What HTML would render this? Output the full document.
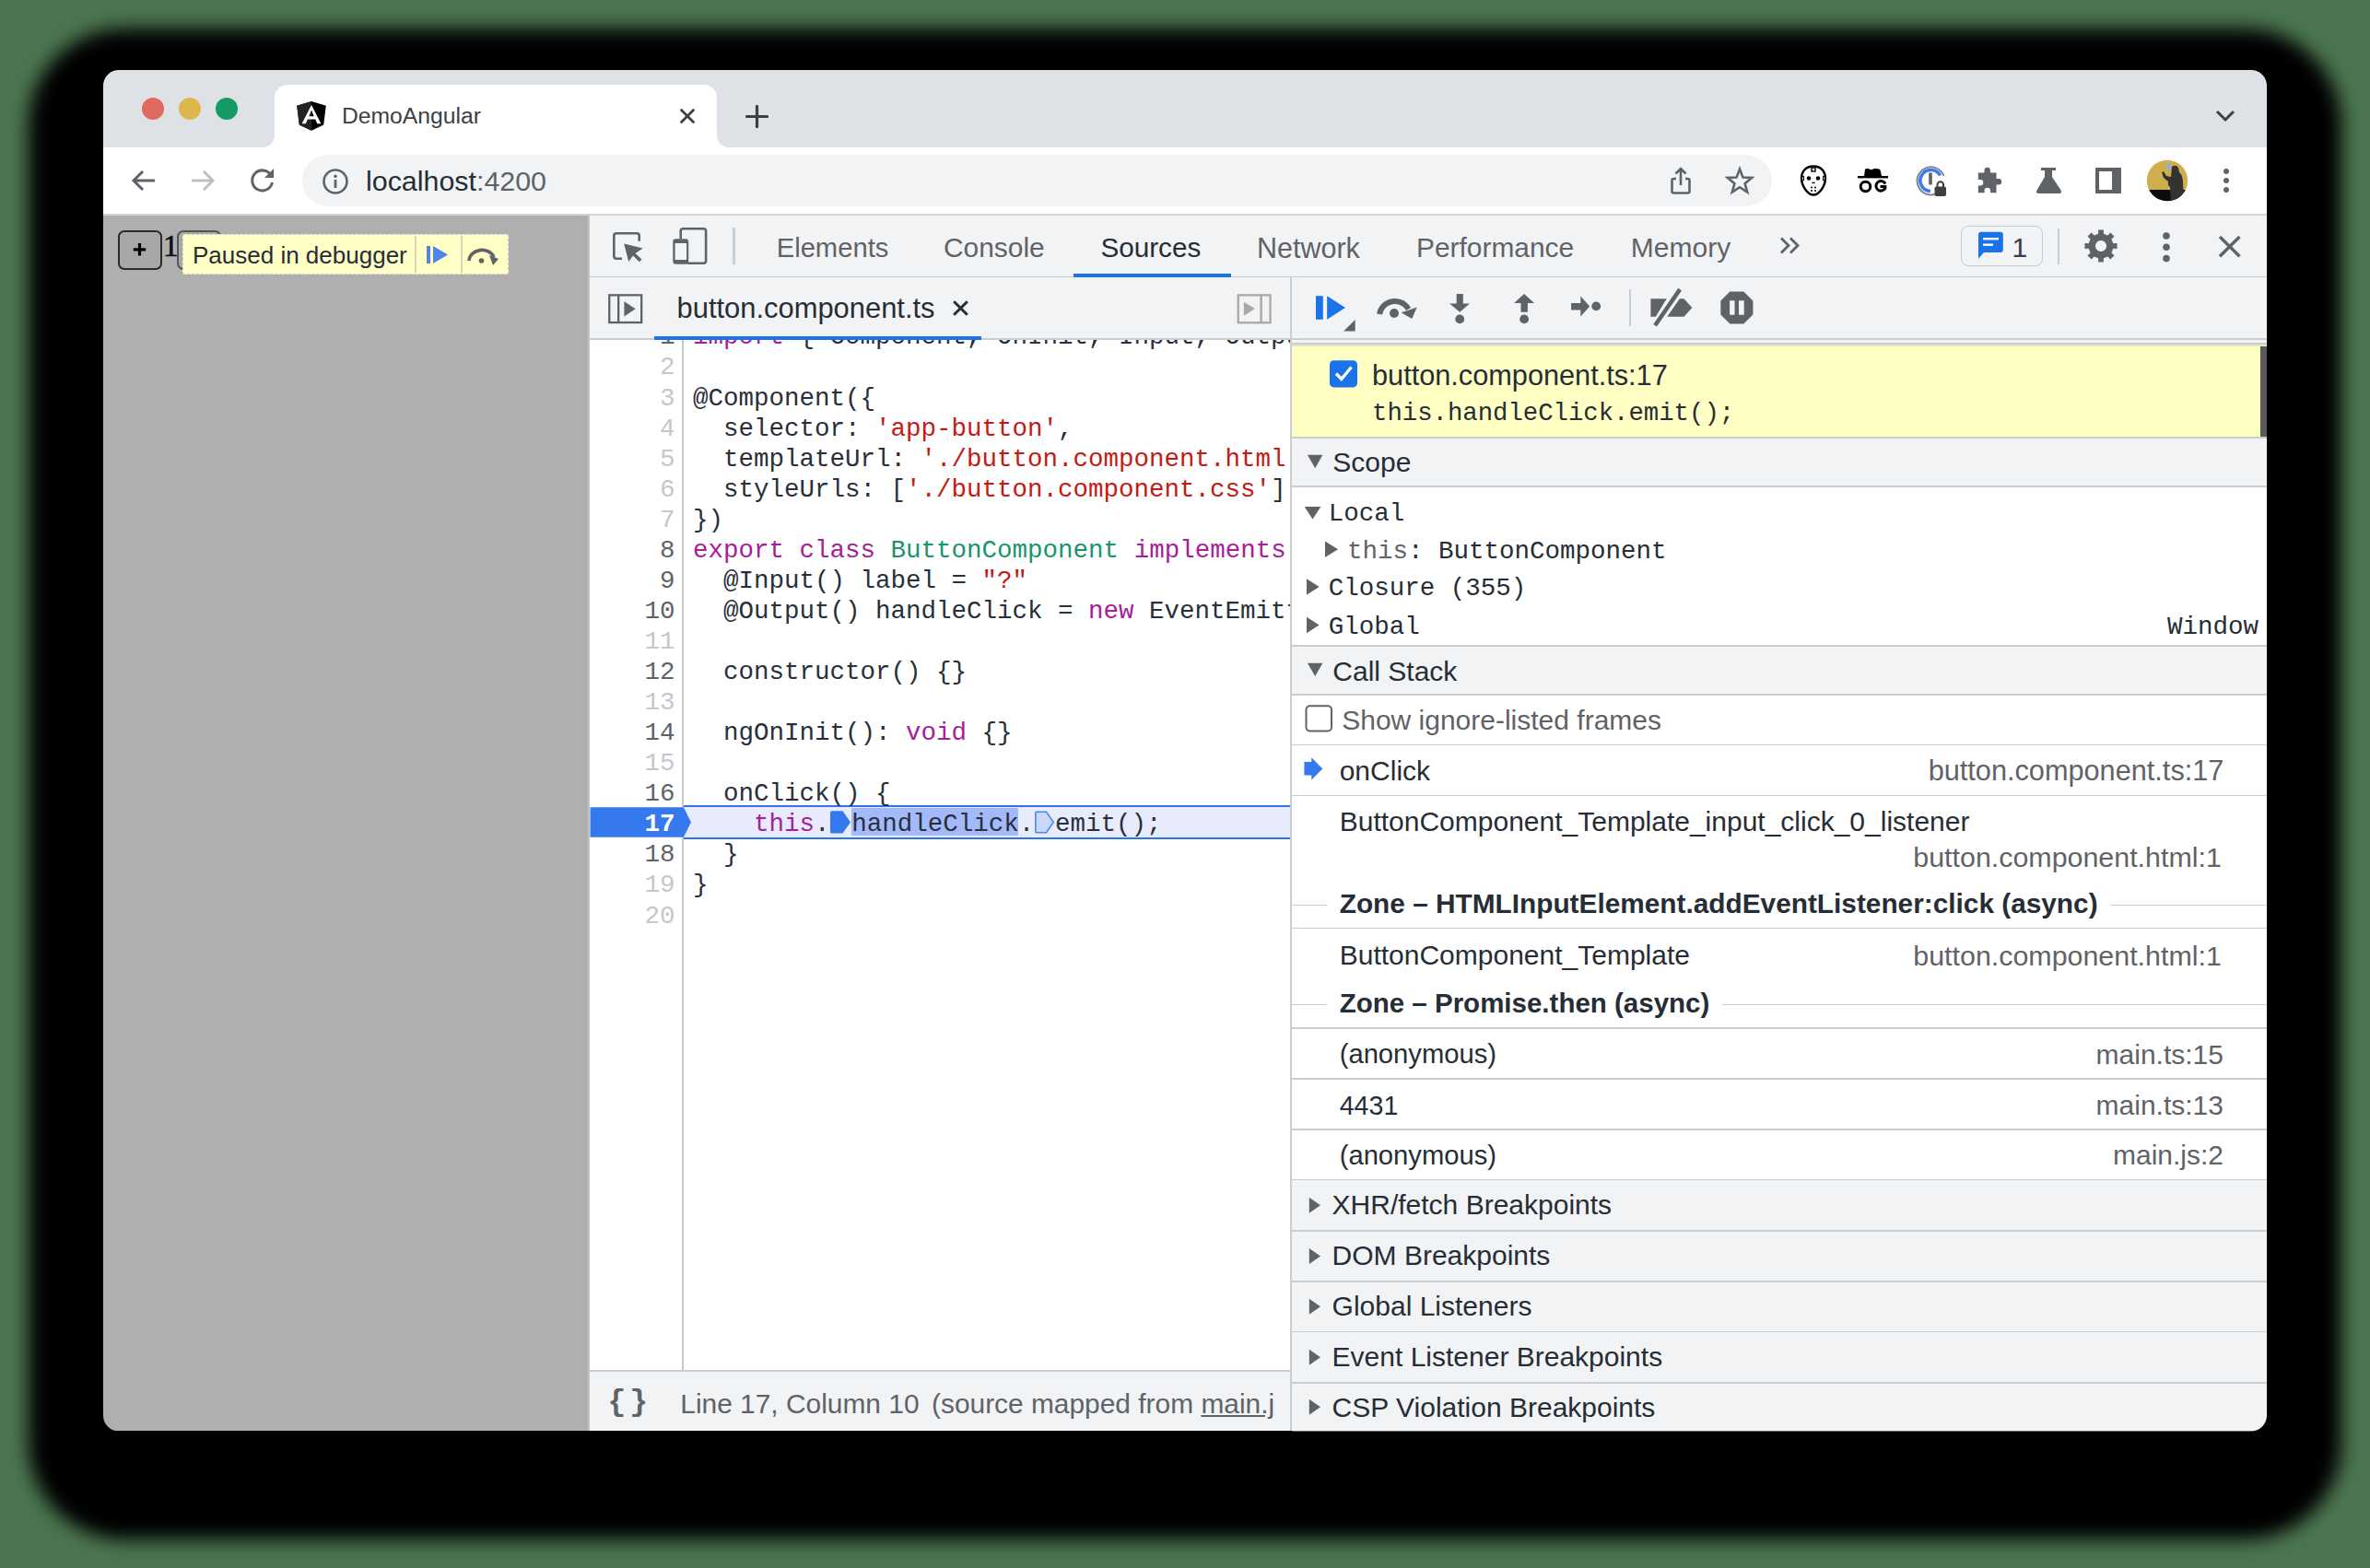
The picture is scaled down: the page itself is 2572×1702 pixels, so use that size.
<!DOCTYPE html>
<html><head><meta charset="utf-8"><style>
html,body{margin:0;padding:0}
body{width:2572px;height:1702px;overflow:hidden;background:#4B7550;position:relative;font-family:"Liberation Sans",sans-serif}
div{position:absolute}
.t{white-space:pre}
#win{left:0;top:0;width:2572px;height:1702px;clip-path:inset(76px 112px 148.4px 112px round 17px)}
</style></head><body>
<div style="left:31px;top:31px;width:2510px;height:1640px;background:#000;border-radius:105px;filter:blur(10px)"></div>
<div id="win">
<div style="left:112.00px;top:76.00px;width:2348.00px;height:84.00px;background:#DEE1E6"></div>
<div style="left:154px;top:106px;width:24px;height:24px;border-radius:50%;background:#DF6A5F"></div>
<div style="left:194px;top:106px;width:24px;height:24px;border-radius:50%;background:#DDB74B"></div>
<div style="left:234px;top:106px;width:24px;height:24px;border-radius:50%;background:#149A64"></div>
<div style="left:298.00px;top:92.00px;width:480.00px;height:68.00px;background:#fff;border-radius:14px 14px 0 0"></div>
<div style="left:284.00px;top:146.00px;width:14.00px;height:14.00px;background:radial-gradient(circle at 0 0,#DEE1E6 14px,#fff 14.6px)"></div>
<div style="left:778.00px;top:146.00px;width:14.00px;height:14.00px;background:radial-gradient(circle at 100% 0,#DEE1E6 14px,#fff 14.6px)"></div>
<svg style="position:absolute;left:322.00px;top:110.00px" width="32" height="32" viewBox="0 0 32 32"><path d="M16 0 L31.8 4.8 L29.2 25.5 L16 31.8 L2.8 25.5 L0.2 4.8 Z" fill="#000"/><path d="M16 0 L0.2 4.8 L2.8 25.5 L16 31.8 Z" fill="#232323"/><path d="M16 4 L26.4 24.3 H22.2 L20.2 19.6 H11.8 L9.8 24.3 H5.6 Z M13.3 16.2 H18.7 L16 9.6 Z" fill="#fff" fill-rule="evenodd"/></svg>
<div class="t" style="left:371.00px;top:114.29px;font-size:24.7px;line-height:24.7px;color:#3C4043;font-family:'Liberation Sans', sans-serif;font-weight:normal;">DemoAngular</div>
<svg style="position:absolute;left:737.00px;top:117.00px" width="18" height="18" viewBox="0 0 18 18"><path d="M2.5 2.5 L15.5 15.5 M15.5 2.5 L2.5 15.5" stroke="#3C4043" stroke-width="2.8" stroke-linecap="round"/></svg>
<svg style="position:absolute;left:809.00px;top:114.00px" width="25" height="25" viewBox="0 0 25 25"><path d="M12.5 1.5 V23.5 M1.5 12.5 H23.5" stroke="#3C4043" stroke-width="3.2" stroke-linecap="round"/></svg>
<svg style="position:absolute;left:2403.00px;top:118.00px" width="24" height="16" viewBox="0 0 24 16"><path d="M3 3 L12 12 L21 3" stroke="#3C4043" stroke-width="3" fill="none"/></svg>
<div style="left:112.00px;top:160.00px;width:2348.00px;height:72.00px;background:#fff"></div>
<div style="left:112.00px;top:231.80px;width:2348.00px;height:2.00px;background:#D3D4D6"></div>
<svg style="position:absolute;left:142.00px;top:182.00px" width="28" height="28" viewBox="0 0 28 28"><path d="M26 14 H4 M13 4 L3 14 L13 24" stroke="#5F6368" stroke-width="3" fill="none"/></svg>
<svg style="position:absolute;left:206.00px;top:182.00px" width="28" height="28" viewBox="0 0 28 28"><path d="M2 14 H24 M15 4 L25 14 L15 24" stroke="#BDC1C6" stroke-width="3" fill="none"/></svg>
<svg style="position:absolute;left:270.00px;top:181.00px" width="30" height="30" viewBox="0 0 30 30"><path d="M24 9 A11 11 0 1 0 25.5 17" stroke="#5F6368" stroke-width="3" fill="none"/><path d="M27 2 V12 H17 Z" fill="#5F6368"/></svg>
<div style="left:328.00px;top:168.00px;width:1595.00px;height:55.60px;background:#F1F3F4;border-radius:28px"></div>
<svg style="position:absolute;left:349.00px;top:182.00px" width="30" height="30" viewBox="0 0 30 30"><circle cx="15" cy="15" r="12.5" stroke="#5F6368" stroke-width="2.6" fill="none"/><rect x="13.6" y="13" width="2.8" height="9" fill="#5F6368"/><circle cx="15" cy="9.3" r="1.7" fill="#5F6368"/></svg>
<div class="t" style="left:397.00px;top:181.47px;font-size:30.4px;line-height:30.4px;color:#262D36;font-family:'Liberation Sans', sans-serif;font-weight:normal;">localhost<span style="color:#5F6368">:4200</span></div>
<svg style="position:absolute;left:1810.00px;top:180.00px" width="28" height="32" viewBox="0 0 28 32"><path d="M9 14 H6.5 Q4.5 14 4.5 16 V27.5 Q4.5 29.5 6.5 29.5 H21.5 Q23.5 29.5 23.5 27.5 V16 Q23.5 14 21.5 14 H19" stroke="#5F6368" stroke-width="2.6" fill="none"/><path d="M14 21 V3.5 M8.5 8.5 L14 3 L19.5 8.5" stroke="#5F6368" stroke-width="2.6" fill="none"/></svg>
<svg style="position:absolute;left:1872.00px;top:180.00px" width="32" height="32" viewBox="0 0 32 32"><path d="M16 3.5 L19.5 12.6 L29 13 L21.6 19.2 L24.2 28.6 L16 23.2 L7.8 28.6 L10.4 19.2 L3 13 L12.5 12.6 Z" stroke="#5F6368" stroke-width="2.6" fill="none" stroke-linejoin="miter"/></svg>
<svg style="position:absolute;left:1953.00px;top:179.00px" width="30" height="34" viewBox="0 0 30 34"><path d="M15 1.5 C24 1.5 28 8 28 14.5 C28 23 21 32.5 15 32.5 C9 32.5 2 23 2 14.5 C2 8 6 1.5 15 1.5 Z" stroke="#000" stroke-width="2.4" fill="#fff"/><circle cx="10" cy="14.5" r="2.3"/><circle cx="20" cy="14.5" r="2.3"/><rect x="13" y="3" width="4" height="4" fill="none" stroke="#000" stroke-width="1.4"/><path d="M13.5 20 L15 19 L16.5 20" stroke="#000" stroke-width="1.2" fill="none"/><circle cx="13" cy="24.5" r="1"/><circle cx="17" cy="24.5" r="1"/><circle cx="13" cy="28" r="1"/><circle cx="17" cy="28" r="1"/><rect x="2.5" y="12.5" width="2" height="4" fill="none" stroke="#000" stroke-width="1"/><rect x="25.5" y="12.5" width="2" height="4" fill="none" stroke="#000" stroke-width="1"/></svg>
<svg style="position:absolute;left:2015.00px;top:182.00px" width="35" height="28" viewBox="0 0 35 28"><path d="M9 2 Q9.5 0.5 12 1 L16 2.2 L19 1 Q25 0.5 25.5 2.5 L27 9 H8 Z" fill="#000"/><rect x="1" y="9" width="33" height="2.4" fill="#000"/><circle cx="9.5" cy="20.5" r="5.3" stroke="#000" stroke-width="3" fill="none"/><path d="M31 17.5 A5.3 5.3 0 1 0 30.8 22.5 V20.5 H25.5" stroke="#000" stroke-width="3" fill="none"/></svg>
<svg style="position:absolute;left:2079.00px;top:179.00px" width="34" height="34" viewBox="0 0 34 34"><path d="M26 29 A15 15 0 1 1 30.5 12" stroke="#80868B" stroke-width="2" fill="none"/><path d="M26.5 11.5 A11.5 11.5 0 1 0 16 28.5" stroke="#3B7BEF" stroke-width="3.6" fill="none"/><rect x="14.2" y="8.5" width="3.6" height="13" fill="#5F6368"/><rect x="20.5" y="23.5" width="12.5" height="10.5" rx="2" fill="#3C4043"/><path d="M23.5 24 V21.5 A3.2 3.2 0 0 1 30 21.5 V24" stroke="#3C4043" stroke-width="2" fill="none"/></svg>
<svg style="position:absolute;left:2146.00px;top:180.00px" width="30" height="30" viewBox="0 0 30 30"><path d="M0.8 7.5 H7.5 V5 A3.2 3.2 0 0 1 13.9 5 V7.5 H20.5 V14 H23 A3.2 3.2 0 0 1 23 20.4 H20.5 V29.3 H14 V27 A3.2 3.2 0 0 0 7.6 27 V29.3 H0.8 V21.5 H3 A3.2 3.2 0 0 0 3 15 H0.8 Z" fill="#5F6368"/></svg>
<svg style="position:absolute;left:2209.00px;top:181.00px" width="30" height="30" viewBox="0 0 30 30"><rect x="6" y="1" width="16" height="3" fill="#5F6368"/><path d="M10 3.5 H18 V11 L27.6 25.5 Q29 29 25.5 29 H3.5 Q0 29 1.4 25.5 L10 11 Z" fill="#5F6368"/></svg>
<svg style="position:absolute;left:2273.00px;top:181.00px" width="30" height="30" viewBox="0 0 30 30"><path d="M1 1 H29 V29 H1 Z M5 5 V25 H19 V5 Z" fill="#5F6368" fill-rule="evenodd"/></svg>
<svg style="position:absolute;left:2329.00px;top:173.00px" width="46" height="46" viewBox="0 0 46 46"><defs><clipPath id="av"><circle cx="23" cy="23" r="22.2"/></clipPath></defs><g clip-path="url(#av)"><rect width="46" height="46" fill="#CFAE4E"/><rect y="33" width="46" height="13" fill="#0C0C10"/><path d="M28 8 Q32 5 35 9 L36 14 Q40 17 40 25 L41 46 H27 L26 30 Q23 29 24 24 L19 20 L17 14 L19 13 L22 18 L27 19 Z" fill="#333"/><path d="M22 5 L25 3 L27 10 L23 13 Z" fill="#8FB0E8"/></g></svg>
<div style="left:2413px;top:183px;width:6px;height:6px;border-radius:50%;background:#5F6368"></div>
<div style="left:2413px;top:193px;width:6px;height:6px;border-radius:50%;background:#5F6368"></div>
<div style="left:2413px;top:203px;width:6px;height:6px;border-radius:50%;background:#5F6368"></div>
<div style="left:112.00px;top:233.80px;width:526.00px;height:1319.20px;background:#AFAFAF"></div>
<div style="left:128.00px;top:250.00px;width:48.00px;height:43.00px;box-sizing:border-box;border:2.2px solid #2B2B2B;border-radius:7px;background:#A8A8A8"></div>
<div class="t" style="left:177px;top:247px;font-family:'Liberation Serif',serif;font-size:33px;line-height:40px;color:#111;-webkit-text-stroke:0.7px #111">1</div>
<div style="left:192.00px;top:250.00px;width:48.00px;height:43.00px;box-sizing:border-box;border:2.2px solid #555;border-radius:7px;background:#A8A8A8"></div>
<div style="left:198.00px;top:254.00px;width:354.00px;height:44.00px;box-sizing:border-box;border:1.6px dashed #C5CAD3;background:#FFFFC6"></div>
<div style="left:450.00px;top:256.00px;width:1.50px;height:40.00px;background:#D7D7B8"></div>
<div style="left:500.30px;top:256.00px;width:1.50px;height:40.00px;background:#D7D7B8"></div>
<div class="t" style="left:209.00px;top:264.19px;font-size:26px;line-height:26px;color:#262D36;font-family:'Liberation Sans', sans-serif;font-weight:normal;">Paused in debugger</div>
<div style="left:638.00px;top:233.80px;width:1.60px;height:1319.20px;background:#C3C5C9"></div>
<div style="left:639.60px;top:233.80px;width:1820.40px;height:66.20px;background:#F1F3F4"></div>
<div style="left:639.60px;top:299.60px;width:1820.40px;height:1.40px;background:#CACDD1"></div>
<div style="left:795.30px;top:247.00px;width:2.40px;height:40.00px;background:#CACDD1"></div>
<div class="t" style="left:842.70px;top:254.68px;font-size:29.2px;line-height:29.2px;color:#5F6368;font-family:'Liberation Sans', sans-serif;font-weight:normal;">Elements</div>
<div class="t" style="left:1024.00px;top:254.09px;font-size:29.9px;line-height:29.9px;color:#5F6368;font-family:'Liberation Sans', sans-serif;font-weight:normal;">Console</div>
<div class="t" style="left:1194.40px;top:254.26px;font-size:29.7px;line-height:29.7px;color:#262D36;font-family:'Liberation Sans', sans-serif;font-weight:normal;">Sources</div>
<div class="t" style="left:1364.00px;top:253.58px;font-size:30.5px;line-height:30.5px;color:#5F6368;font-family:'Liberation Sans', sans-serif;font-weight:normal;">Network</div>
<div class="t" style="left:1537.00px;top:254.09px;font-size:29.9px;line-height:29.9px;color:#5F6368;font-family:'Liberation Sans', sans-serif;font-weight:normal;">Performance</div>
<div class="t" style="left:1769.80px;top:254.00px;font-size:30.0px;line-height:30.0px;color:#5F6368;font-family:'Liberation Sans', sans-serif;font-weight:normal;">Memory</div>
<div style="left:1165.00px;top:297.00px;width:170.50px;height:4.00px;background:#1A73E8"></div>
<div style="left:2127.70px;top:244.50px;width:89.50px;height:44.90px;box-sizing:border-box;border:1.8px solid #C7CACE;border-radius:8px"></div>
<div class="t" style="left:2183.50px;top:254.30px;font-size:30px;line-height:30px;color:#3C4043;font-family:'Liberation Sans', sans-serif;font-weight:normal;">1</div>
<div style="left:2233.00px;top:247.70px;width:2.20px;height:39.10px;background:#CACDD1"></div>
<div style="left:639.60px;top:301.00px;width:760.40px;height:66.00px;background:#F1F3F4"></div>
<div style="left:639.60px;top:367.00px;width:760.40px;height:2.00px;background:#CACDD1"></div>
<div class="t" style="left:734.60px;top:319.84px;font-size:30.9px;line-height:30.9px;color:#262D36;font-family:'Liberation Sans', sans-serif;font-weight:normal;">button.component.ts</div>
<div style="left:710.00px;top:365.00px;width:354.80px;height:4.00px;background:#1A73E8"></div>
<div style="left:1400.00px;top:301.00px;width:2.30px;height:1252.00px;background:#CACDD1"></div>
<div style="left:1402.30px;top:301.00px;width:1057.70px;height:66.00px;background:#F1F3F4"></div>
<div style="left:1402.30px;top:367.00px;width:1057.70px;height:2.00px;background:#CACDD1"></div>
<div style="left:1402.30px;top:369.00px;width:1057.70px;height:3.00px;background:#F1F3F4"></div>
<div style="left:1402.30px;top:372.00px;width:1057.70px;height:2.20px;background:#CACDD1"></div>
<div style="left:1768.00px;top:313.80px;width:2.00px;height:40.10px;background:#CACDD1"></div>
<div style="left:639.60px;top:369.00px;width:760.40px;height:1119.00px;background:#fff"></div>
<div style="left:740.20px;top:369.00px;width:1.70px;height:1119.00px;background:#C6C9CE"></div>
<div style="left:741.90px;top:874.30px;width:658.10px;height:36.30px;background:#E7EBFC"></div>
<div style="left:741.90px;top:874.30px;width:658.10px;height:1.60px;background:#2F75E8"></div>
<div style="left:741.90px;top:909.00px;width:658.10px;height:1.60px;background:#2F75E8"></div>
<svg style="position:absolute;left:640px;top:876px" width="112" height="34" viewBox="0 0 112 34"><path d="M0.5 0.2 H101.9 L109.9 16.4 L101.9 32.7 H0.5 Z" fill="#3679EE"/></svg>
<div style="left:924.20px;top:876.80px;width:181.30px;height:30.40px;background:#A3B9F9"></div>
<div style="left:0;top:0;width:2572px;height:1702px;clip-path:inset(369px 1172px 214px 640px)">
<div class="t" style="right:1839.50px;top:352.41px;font-size:27.5px;line-height:27.5px;color:#5F6368;font-family:'Liberation Mono', monospace;font-weight:normal;">1</div>
<div class="t" style="left:752.00px;top:352.41px;font-size:27.5px;line-height:27.5px;color:#27303B;font-family:'Liberation Mono', monospace;font-weight:normal;"><span style="color:#A71D9A">import</span> { Component, OnInit, Input, Output, EventEmitter } <span style="color:#A71D9A">from</span> <span style="color:#C41A16">'@angular/core'</span>;</div>
<div class="t" style="right:1839.50px;top:385.47px;font-size:27.5px;line-height:27.5px;color:#C4C7CB;font-family:'Liberation Mono', monospace;font-weight:normal;">2</div>
<div class="t" style="left:752.00px;top:385.47px;font-size:27.5px;line-height:27.5px;color:#27303B;font-family:'Liberation Mono', monospace;font-weight:normal;"></div>
<div class="t" style="right:1839.50px;top:418.53px;font-size:27.5px;line-height:27.5px;color:#C4C7CB;font-family:'Liberation Mono', monospace;font-weight:normal;">3</div>
<div class="t" style="left:752.00px;top:418.53px;font-size:27.5px;line-height:27.5px;color:#27303B;font-family:'Liberation Mono', monospace;font-weight:normal;">@Component({</div>
<div class="t" style="right:1839.50px;top:451.59px;font-size:27.5px;line-height:27.5px;color:#C4C7CB;font-family:'Liberation Mono', monospace;font-weight:normal;">4</div>
<div class="t" style="left:752.00px;top:451.59px;font-size:27.5px;line-height:27.5px;color:#27303B;font-family:'Liberation Mono', monospace;font-weight:normal;">  selector: <span style="color:#C41A16">'app-button'</span>,</div>
<div class="t" style="right:1839.50px;top:484.65px;font-size:27.5px;line-height:27.5px;color:#C4C7CB;font-family:'Liberation Mono', monospace;font-weight:normal;">5</div>
<div class="t" style="left:752.00px;top:484.65px;font-size:27.5px;line-height:27.5px;color:#27303B;font-family:'Liberation Mono', monospace;font-weight:normal;">  templateUrl: <span style="color:#C41A16">'./button.component.html'</span>,</div>
<div class="t" style="right:1839.50px;top:517.71px;font-size:27.5px;line-height:27.5px;color:#C4C7CB;font-family:'Liberation Mono', monospace;font-weight:normal;">6</div>
<div class="t" style="left:752.00px;top:517.71px;font-size:27.5px;line-height:27.5px;color:#27303B;font-family:'Liberation Mono', monospace;font-weight:normal;">  styleUrls: [<span style="color:#C41A16">'./button.component.css'</span>]</div>
<div class="t" style="right:1839.50px;top:550.77px;font-size:27.5px;line-height:27.5px;color:#C4C7CB;font-family:'Liberation Mono', monospace;font-weight:normal;">7</div>
<div class="t" style="left:752.00px;top:550.77px;font-size:27.5px;line-height:27.5px;color:#27303B;font-family:'Liberation Mono', monospace;font-weight:normal;">})</div>
<div class="t" style="right:1839.50px;top:583.83px;font-size:27.5px;line-height:27.5px;color:#5F6368;font-family:'Liberation Mono', monospace;font-weight:normal;">8</div>
<div class="t" style="left:752.00px;top:583.83px;font-size:27.5px;line-height:27.5px;color:#27303B;font-family:'Liberation Mono', monospace;font-weight:normal;"><span style="color:#A71D9A">export</span> <span style="color:#A71D9A">class</span> <span style="color:#19956A">ButtonComponent</span> <span style="color:#A71D9A">implements</span> OnInit {</div>
<div class="t" style="right:1839.50px;top:616.89px;font-size:27.5px;line-height:27.5px;color:#5F6368;font-family:'Liberation Mono', monospace;font-weight:normal;">9</div>
<div class="t" style="left:752.00px;top:616.89px;font-size:27.5px;line-height:27.5px;color:#27303B;font-family:'Liberation Mono', monospace;font-weight:normal;">  @Input() label = <span style="color:#C41A16">"?"</span></div>
<div class="t" style="right:1839.50px;top:649.95px;font-size:27.5px;line-height:27.5px;color:#5F6368;font-family:'Liberation Mono', monospace;font-weight:normal;">10</div>
<div class="t" style="left:752.00px;top:649.95px;font-size:27.5px;line-height:27.5px;color:#27303B;font-family:'Liberation Mono', monospace;font-weight:normal;">  @Output() handleClick = <span style="color:#A71D9A">new</span> EventEmitter&lt;string&gt;();</div>
<div class="t" style="right:1839.50px;top:683.01px;font-size:27.5px;line-height:27.5px;color:#C4C7CB;font-family:'Liberation Mono', monospace;font-weight:normal;">11</div>
<div class="t" style="left:752.00px;top:683.01px;font-size:27.5px;line-height:27.5px;color:#27303B;font-family:'Liberation Mono', monospace;font-weight:normal;"></div>
<div class="t" style="right:1839.50px;top:716.07px;font-size:27.5px;line-height:27.5px;color:#5F6368;font-family:'Liberation Mono', monospace;font-weight:normal;">12</div>
<div class="t" style="left:752.00px;top:716.07px;font-size:27.5px;line-height:27.5px;color:#27303B;font-family:'Liberation Mono', monospace;font-weight:normal;">  constructor() {}</div>
<div class="t" style="right:1839.50px;top:749.13px;font-size:27.5px;line-height:27.5px;color:#C4C7CB;font-family:'Liberation Mono', monospace;font-weight:normal;">13</div>
<div class="t" style="left:752.00px;top:749.13px;font-size:27.5px;line-height:27.5px;color:#27303B;font-family:'Liberation Mono', monospace;font-weight:normal;"></div>
<div class="t" style="right:1839.50px;top:782.19px;font-size:27.5px;line-height:27.5px;color:#5F6368;font-family:'Liberation Mono', monospace;font-weight:normal;">14</div>
<div class="t" style="left:752.00px;top:782.19px;font-size:27.5px;line-height:27.5px;color:#27303B;font-family:'Liberation Mono', monospace;font-weight:normal;">  ngOnInit(): <span style="color:#A71D9A">void</span> {}</div>
<div class="t" style="right:1839.50px;top:815.25px;font-size:27.5px;line-height:27.5px;color:#C4C7CB;font-family:'Liberation Mono', monospace;font-weight:normal;">15</div>
<div class="t" style="left:752.00px;top:815.25px;font-size:27.5px;line-height:27.5px;color:#27303B;font-family:'Liberation Mono', monospace;font-weight:normal;"></div>
<div class="t" style="right:1839.50px;top:848.31px;font-size:27.5px;line-height:27.5px;color:#5F6368;font-family:'Liberation Mono', monospace;font-weight:normal;">16</div>
<div class="t" style="left:752.00px;top:848.31px;font-size:27.5px;line-height:27.5px;color:#27303B;font-family:'Liberation Mono', monospace;font-weight:normal;">  onClick() {</div>
<div class="t" style="right:1839.50px;top:881.37px;font-size:27.5px;line-height:27.5px;color:#fff;font-family:'Liberation Mono', monospace;font-weight:bold;">17</div>
<div class="t" style="right:1839.50px;top:914.43px;font-size:27.5px;line-height:27.5px;color:#5F6368;font-family:'Liberation Mono', monospace;font-weight:normal;">18</div>
<div class="t" style="left:752.00px;top:914.43px;font-size:27.5px;line-height:27.5px;color:#27303B;font-family:'Liberation Mono', monospace;font-weight:normal;">  }</div>
<div class="t" style="right:1839.50px;top:947.49px;font-size:27.5px;line-height:27.5px;color:#C4C7CB;font-family:'Liberation Mono', monospace;font-weight:normal;">19</div>
<div class="t" style="left:752.00px;top:947.49px;font-size:27.5px;line-height:27.5px;color:#27303B;font-family:'Liberation Mono', monospace;font-weight:normal;">}</div>
<div class="t" style="right:1839.50px;top:980.55px;font-size:27.5px;line-height:27.5px;color:#C4C7CB;font-family:'Liberation Mono', monospace;font-weight:normal;">20</div>
<div class="t" style="left:752.00px;top:980.55px;font-size:27.5px;line-height:27.5px;color:#27303B;font-family:'Liberation Mono', monospace;font-weight:normal;"></div>
<div class="t" style="left:752.00px;top:881.37px;font-size:27.5px;line-height:27.5px;color:#27303B;font-family:'Liberation Mono', monospace;font-weight:normal;">    <span style="color:#A71D9A">this</span>.</div>
<div class="t" style="left:924.20px;top:881.37px;font-size:27.5px;line-height:27.5px;color:#27303B;font-family:'Liberation Mono', monospace;font-weight:normal;">handleClick.</div>
<div class="t" style="left:1145.00px;top:881.37px;font-size:27.5px;line-height:27.5px;color:#27303B;font-family:'Liberation Mono', monospace;font-weight:normal;">emit();</div>
</div>
<div style="left:639.60px;top:1487.00px;width:760.40px;height:2.00px;background:#CACDD1"></div>
<div style="left:639.60px;top:1489.00px;width:760.40px;height:64.00px;background:#F1F3F4"></div>
<div style="left:0;top:0;width:2572px;height:1702px;clip-path:inset(1489px 1188px 149px 640px)">
<div class="t" style="left:659.50px;top:1505.71px;font-size:33px;line-height:33px;color:#5F6368;font-family:'Liberation Mono', monospace;font-weight:bold;letter-spacing:4px">{}</div>
<div class="t" style="left:738.30px;top:1509.09px;font-size:29.9px;line-height:29.9px;color:#5F6368;font-family:'Liberation Sans', sans-serif;font-weight:normal;">Line 17, Column 10</div>
<div class="t" style="left:1011.00px;top:1509.09px;font-size:29.9px;line-height:29.9px;color:#5F6368;font-family:'Liberation Sans', sans-serif;font-weight:normal;">(source mapped from <span style="text-decoration:underline">main.js</span>)</div>
</div>
<div style="left:1402.30px;top:374.20px;width:1057.70px;height:1.80px;background:#E4E4C8"></div>
<div style="left:1402.30px;top:376.00px;width:1051.00px;height:98.00px;background:#FFFFC4"></div>
<div style="left:2453.30px;top:376.00px;width:6.70px;height:98.00px;background:#5A5A5A"></div>
<div style="left:1402.30px;top:474.00px;width:1057.70px;height:1.60px;background:#CACDD1"></div>
<div class="t" style="left:1489.00px;top:392.61px;font-size:30.7px;line-height:30.7px;color:#262D36;font-family:'Liberation Sans', sans-serif;font-weight:normal;">button.component.ts:17</div>
<div class="t" style="left:1489.00px;top:435.48px;font-size:27.3px;line-height:27.3px;color:#262D36;font-family:'Liberation Mono', monospace;font-weight:normal;">this.handleClick.emit();</div>
<div style="left:1402.30px;top:475.60px;width:1057.70px;height:51.60px;background:#F1F3F4"></div>
<div style="left:1402.30px;top:527.20px;width:1057.70px;height:1.60px;background:#CACDD1"></div>
<div class="t" style="left:1446.30px;top:487.41px;font-size:30px;line-height:30px;color:#262D36;font-family:'Liberation Sans', sans-serif;font-weight:normal;">Scope</div>
<div style="left:1402.30px;top:528.80px;width:1057.70px;height:171.20px;background:#fff"></div>
<div class="t" style="left:1441.80px;top:543.63px;font-size:27.5px;line-height:27.5px;color:#262D36;font-family:'Liberation Mono', monospace;font-weight:normal;">Local</div>
<div class="t" style="left:1462.00px;top:584.63px;font-size:27.5px;line-height:27.5px;color:#262D36;font-family:'Liberation Mono', monospace;font-weight:normal;"><span style="color:#5F6368">this</span>: ButtonComponent</div>
<div class="t" style="left:1441.80px;top:625.43px;font-size:27.5px;line-height:27.5px;color:#262D36;font-family:'Liberation Mono', monospace;font-weight:normal;">Closure (355)</div>
<div class="t" style="left:1441.80px;top:666.93px;font-size:27.5px;line-height:27.5px;color:#262D36;font-family:'Liberation Mono', monospace;font-weight:normal;">Global</div>
<div class="t" style="right:121.00px;top:666.93px;font-size:27.5px;line-height:27.5px;color:#262D36;font-family:'Liberation Mono', monospace;font-weight:normal;">Window</div>
<div style="left:1402.30px;top:700.00px;width:1057.70px;height:1.60px;background:#CACDD1"></div>
<div style="left:1402.30px;top:701.60px;width:1057.70px;height:51.40px;background:#F1F3F4"></div>
<div style="left:1402.30px;top:753.00px;width:1057.70px;height:1.60px;background:#CACDD1"></div>
<div class="t" style="left:1446.30px;top:713.81px;font-size:30px;line-height:30px;color:#262D36;font-family:'Liberation Sans', sans-serif;font-weight:normal;">Call Stack</div>
<div style="left:1402.30px;top:754.60px;width:1057.70px;height:525.40px;background:#fff"></div>
<div class="t" style="left:1456.20px;top:767.41px;font-size:30px;line-height:30px;color:#5F6368;font-family:'Liberation Sans', sans-serif;font-weight:normal;">Show ignore-listed frames</div>
<div style="left:1402.30px;top:807.60px;width:1057.70px;height:1.60px;background:#CACDD1"></div>
<div class="t" style="left:1453.70px;top:822.11px;font-size:30px;line-height:30px;color:#262D36;font-family:'Liberation Sans', sans-serif;font-weight:normal;">onClick</div>
<div class="t" style="right:158.60px;top:821.71px;font-size:30.7px;line-height:30.7px;color:#5F6368;font-family:'Liberation Sans', sans-serif;font-weight:normal;">button.component.ts:17</div>
<div style="left:1402.30px;top:862.50px;width:1057.70px;height:1.60px;background:#CACDD1"></div>
<div class="t" style="left:1453.70px;top:877.11px;font-size:30px;line-height:30px;color:#262D36;font-family:'Liberation Sans', sans-serif;font-weight:normal;">ButtonComponent_Template_input_click_0_listener</div>
<div class="t" style="right:161.20px;top:914.77px;font-size:30.4px;line-height:30.4px;color:#5F6368;font-family:'Liberation Sans', sans-serif;font-weight:normal;">button.component.html:1</div>
<div style="left:1402.30px;top:981.60px;width:38.20px;height:1.60px;background:#CACDD1"></div>
<div class="t" style="left:1453.70px;top:965.87px;font-size:29.8px;line-height:29.8px;color:#262D36;font-family:'Liberation Sans', sans-serif;font-weight:bold;">Zone – HTMLInputElement.addEventListener:click (async)</div>
<div style="left:2290.00px;top:981.60px;width:170.00px;height:1.60px;background:#CACDD1"></div>
<div style="left:1402.30px;top:1006.80px;width:1057.70px;height:1.60px;background:#CACDD1"></div>
<div class="t" style="left:1453.70px;top:1022.11px;font-size:30px;line-height:30px;color:#262D36;font-family:'Liberation Sans', sans-serif;font-weight:normal;">ButtonComponent_Template</div>
<div class="t" style="right:161.20px;top:1021.77px;font-size:30.4px;line-height:30.4px;color:#5F6368;font-family:'Liberation Sans', sans-serif;font-weight:normal;">button.component.html:1</div>
<div style="left:1402.30px;top:1089.60px;width:38.20px;height:1.60px;background:#CACDD1"></div>
<div class="t" style="left:1453.70px;top:1074.23px;font-size:29.5px;line-height:29.5px;color:#262D36;font-family:'Liberation Sans', sans-serif;font-weight:bold;">Zone – Promise.then (async)</div>
<div style="left:1869.00px;top:1089.60px;width:591.00px;height:1.60px;background:#CACDD1"></div>
<div style="left:1402.30px;top:1115.20px;width:1057.70px;height:1.60px;background:#CACDD1"></div>
<div class="t" style="left:1453.70px;top:1130.18px;font-size:29.2px;line-height:29.2px;color:#262D36;font-family:'Liberation Sans', sans-serif;font-weight:normal;">(anonymous)</div>
<div class="t" style="right:159.00px;top:1129.51px;font-size:30px;line-height:30px;color:#5F6368;font-family:'Liberation Sans', sans-serif;font-weight:normal;">main.ts:15</div>
<div style="left:1402.30px;top:1170.20px;width:1057.70px;height:1.60px;background:#CACDD1"></div>
<div class="t" style="left:1453.70px;top:1185.99px;font-size:28.6px;line-height:28.6px;color:#262D36;font-family:'Liberation Sans', sans-serif;font-weight:normal;">4431</div>
<div class="t" style="right:159.00px;top:1184.81px;font-size:30px;line-height:30px;color:#5F6368;font-family:'Liberation Sans', sans-serif;font-weight:normal;">main.ts:13</div>
<div style="left:1402.30px;top:1225.00px;width:1057.70px;height:1.60px;background:#CACDD1"></div>
<div class="t" style="left:1453.70px;top:1239.78px;font-size:29.2px;line-height:29.2px;color:#262D36;font-family:'Liberation Sans', sans-serif;font-weight:normal;">(anonymous)</div>
<div class="t" style="right:159.00px;top:1239.11px;font-size:30px;line-height:30px;color:#5F6368;font-family:'Liberation Sans', sans-serif;font-weight:normal;">main.js:2</div>
<div style="left:1402.30px;top:1279.80px;width:1057.70px;height:1.60px;background:#CACDD1"></div>
<div style="left:1402.30px;top:1281.40px;width:1057.70px;height:53.60px;background:#F1F3F4"></div>
<div style="left:1402.30px;top:1335.00px;width:1057.70px;height:1.60px;background:#CACDD1"></div>
<div class="t" style="left:1445.60px;top:1293.40px;font-size:30px;line-height:30px;color:#262D36;font-family:'Liberation Sans', sans-serif;font-weight:normal;">XHR/fetch Breakpoints</div>
<div style="left:1402.30px;top:1336.60px;width:1057.70px;height:53.60px;background:#F1F3F4"></div>
<div style="left:1402.30px;top:1390.20px;width:1057.70px;height:1.60px;background:#CACDD1"></div>
<div class="t" style="left:1445.60px;top:1348.31px;font-size:30px;line-height:30px;color:#262D36;font-family:'Liberation Sans', sans-serif;font-weight:normal;">DOM Breakpoints</div>
<div style="left:1402.30px;top:1391.80px;width:1057.70px;height:52.80px;background:#F1F3F4"></div>
<div style="left:1402.30px;top:1444.60px;width:1057.70px;height:1.60px;background:#CACDD1"></div>
<div class="t" style="left:1445.60px;top:1403.31px;font-size:30px;line-height:30px;color:#262D36;font-family:'Liberation Sans', sans-serif;font-weight:normal;">Global Listeners</div>
<div style="left:1402.30px;top:1446.20px;width:1057.70px;height:53.90px;background:#F1F3F4"></div>
<div style="left:1402.30px;top:1500.10px;width:1057.70px;height:1.60px;background:#CACDD1"></div>
<div class="t" style="left:1445.60px;top:1457.81px;font-size:30px;line-height:30px;color:#262D36;font-family:'Liberation Sans', sans-serif;font-weight:normal;">Event Listener Breakpoints</div>
<div style="left:1402.30px;top:1501.70px;width:1057.70px;height:51.30px;background:#F1F3F4"></div>
<div style="left:1402.30px;top:1553.00px;width:1057.70px;height:1.60px;background:#CACDD1"></div>
<div class="t" style="left:1445.60px;top:1512.81px;font-size:30px;line-height:30px;color:#262D36;font-family:'Liberation Sans', sans-serif;font-weight:normal;">CSP Violation Breakpoints</div>
<svg style="position:absolute;left:0;top:0" width="2572" height="1702" viewBox="0 0 2572 1702"><path d="M151.5 264 V277.5 M144.8 270.8 H158.2" stroke="#000" stroke-width="3.2"/><rect x="463" y="267" width="4" height="19" fill="#4D86EA"/><path d="M470 267 L486 276.5 L470 286 Z" fill="#4D86EA"/><path d="M509 283 A14 12 0 0 1 536 279" stroke="#5F6368" stroke-width="3.6" fill="none"/><path d="M531 277 L541 281 L535 288 Z" fill="#5F6368"/><circle cx="522.5" cy="283" r="2.8" fill="#5F6368"/><path d="M675 280.7 H669 Q666.3 280.7 666.3 278 V256 Q666.3 253.3 669 253.3 H691 Q693.7 253.3 693.7 256 V261.8" stroke="#5F6368" stroke-width="2.6" fill="none"/><path d="M677.2 264.5 L697.7 269.4 L689.5 275 L696.5 281.6 L693.8 284.2 L687 277.5 L682.2 284 Z" fill="#5F6368"/><path d="M738.7 259 V251 Q738.7 248.3 741.4 248.3 H763.4 Q766.1 248.3 766.1 251 V283 Q766.1 285.7 763.4 285.7 H747" stroke="#5F6368" stroke-width="2.6" fill="none"/><path d="M733.5 259.2 H744 Q747.2 259.2 747.2 262.4 V286.7 H733.5 Q730.3 286.7 730.3 283.5 V262.4 Q730.3 259.2 733.5 259.2 Z M732.6 264 V282 H745.1 V264 Z" fill="#5F6368" fill-rule="evenodd"/><path d="M1933 258.5 L1941 266.5 L1933 274.5 M1943 258.5 L1951 266.5 L1943 274.5" stroke="#5F6368" stroke-width="2.8" fill="none"/><path d="M2149.8 251.7 H2170.8 Q2173.8 251.7 2173.8 254.7 V271 Q2173.8 274 2170.8 274 H2153 L2147 280.7 V254.7 Q2147 251.7 2149.8 251.7 Z" fill="#1A73E8"/><rect x="2152" y="258" width="17" height="2.4" fill="#fff"/><rect x="2152" y="264.5" width="11" height="2.4" fill="#fff"/><path d="M2293.30 264.14 L2297.56 264.08 L2297.56 269.92 L2293.30 269.86 L2291.43 274.38 L2294.48 277.35 L2290.35 281.48 L2287.38 278.43 L2282.86 280.30 L2282.92 284.56 L2277.08 284.56 L2277.14 280.30 L2272.62 278.43 L2269.65 281.48 L2265.52 277.35 L2268.57 274.38 L2266.70 269.86 L2262.44 269.92 L2262.44 264.08 L2266.70 264.14 L2268.57 259.62 L2265.52 256.65 L2269.65 252.52 L2272.62 255.57 L2277.14 253.70 L2277.08 249.44 L2282.92 249.44 L2282.86 253.70 L2287.38 255.57 L2290.35 252.52 L2294.48 256.65 L2291.43 259.62 Z M2280 261 A6 6 0 1 0 2280.01 261 Z" fill="#5F6368" fill-rule="evenodd"/><circle cx="2351" cy="256" r="3.8" fill="#5F6368"/><circle cx="2351" cy="268.3" r="3.8" fill="#5F6368"/><circle cx="2351" cy="280.6" r="3.8" fill="#5F6368"/><path d="M2409 257 L2430.5 278.3 M2430.5 257 L2409 278.3" stroke="#5F6368" stroke-width="3.4"/><rect x="661.25" y="320.35" width="34.9" height="29.7" stroke="#5F6368" stroke-width="2.3" fill="none"/><rect x="670" y="320" width="2.3" height="31" fill="#5F6368"/><path d="M677.4 327.3 L689.7 335.2 L677.4 343.5 Z" fill="#5F6368"/><path d="M1035.2 327.2 L1049.8 341.8 M1049.8 327.2 L1035.2 341.8" stroke="#262D36" stroke-width="3"/><rect x="1343.75" y="320.35" width="34.8" height="29.9" stroke="#A8A9AB" stroke-width="2.3" fill="none"/><rect x="1367.4" y="320" width="2.4" height="31" fill="#A8A9AB"/><path d="M1349.9 327.7 L1362 335.1 L1349.9 342.7 Z" fill="#A8A9AB"/><rect x="1428" y="321.2" width="7.8" height="25.6" fill="#1A73E8"/><path d="M1440.2 321.2 L1460 334 L1440.2 346.8 Z" fill="#1A73E8"/><path d="M1470.7 347 V359.4 H1458.1 Z" fill="#5F6368"/><path d="M1497 341 A17 17 0 0 1 1528.5 335.5" stroke="#5F6368" stroke-width="6" fill="none"/><path d="M1520.7 339.3 L1537.7 333.5 L1532.3 346.1 Z" fill="#5F6368"/><circle cx="1513" cy="340" r="5" fill="#5F6368"/><path d="M1580.7 318.9 H1587.8 V329.5 H1595 L1584.2 338.8 L1573.1 329.5 H1580.7 Z" fill="#5F6368"/><circle cx="1584.2" cy="346.4" r="4.9" fill="#5F6368"/><path d="M1654.1 318.9 L1665.1 328.9 H1657.9 V338.8 H1650.5 V328.9 H1643.1 Z" fill="#5F6368"/><circle cx="1654.1" cy="346.4" r="4.9" fill="#5F6368"/><path d="M1705.1 329 H1715.3 V321.5 L1725.2 332.4 L1715.3 343.4 V336.4 H1705.1 Z" fill="#5F6368"/><circle cx="1732.2" cy="332.4" r="4.9" fill="#5F6368"/><path d="M1791.4 324.2 H1808.7 L1796.8 343.8 H1791.4 Z M1822.8 324.2 H1827.5 L1836.3 334 L1827.5 343.8 H1809.3 Z" fill="#5F6368"/><path d="M1796.1 353.3 L1823.1 314.1" stroke="#5F6368" stroke-width="4.5"/><path d="M1877.4 316.5 H1892.3 L1902.4 326.6 V341.5 L1892.3 351.6 H1877.4 L1867.3 341.5 V326.6 Z M1877.1 326.3 V341.8 H1882.5 V326.3 Z M1887 326.3 V341.8 H1892.7 V326.3 Z" fill="#5F6368" fill-rule="evenodd"/><path d="M903 880.3 H914.5 L923 892.4 L914.5 904.6 H903 Q901 904.6 901 902.6 V882.3 Q901 880.3 903 880.3 Z" fill="#3679EE"/><path d="M1125 881.2 H1135.5 L1143.2 892.4 L1135.5 903.7 H1125 Q1123.8 903.7 1123.8 902.5 V882.4 Q1123.8 881.2 1125 881.2 Z" fill="#C9D8FA" stroke="#4D88EE" stroke-width="1.6"/><rect x="1443" y="391.3" width="30" height="29.1" rx="4.5" fill="#1A73E8"/><path d="M1450 405.5 L1455.8 411.5 L1466.5 398.5" stroke="#fff" stroke-width="3.4" fill="none"/><path d="M1419 493.80 H1435.4 L1427.2 508.20 Z" fill="#5F6368"/><path d="M1415.7 550 H1433.4 L1424.5 563.5 Z" fill="#5F6368"/><path d="M1438 587.5 V605 L1452 596.2 Z" fill="#5F6368"/><path d="M1418 628.3 V645.8 L1431.6 637 Z" fill="#5F6368"/><path d="M1418 669.8 V687.3 L1431.6 678.5 Z" fill="#5F6368"/><path d="M1419 719.70 H1435.4 L1427.2 734.10 Z" fill="#5F6368"/><rect x="1417.5" y="766.3" width="27.5" height="27.1" rx="4" stroke="#5F6368" stroke-width="2" fill="none"/><path d="M1415.4 827 H1423.3 V822.3 L1435.3 834.5 L1423.3 846.6 V841.6 H1415.4 Z" fill="#3679EE"/><path d="M1420.8 1299.70 V1316.70 L1433 1308.20 Z" fill="#5F6368"/><path d="M1420.8 1354.90 V1371.90 L1433 1363.40 Z" fill="#5F6368"/><path d="M1420.8 1409.70 V1426.70 L1433 1418.20 Z" fill="#5F6368"/><path d="M1420.8 1464.65 V1481.65 L1433 1473.15 Z" fill="#5F6368"/><path d="M1420.8 1518.85 V1535.85 L1433 1527.35 Z" fill="#5F6368"/></svg>
</div>
</body></html>
